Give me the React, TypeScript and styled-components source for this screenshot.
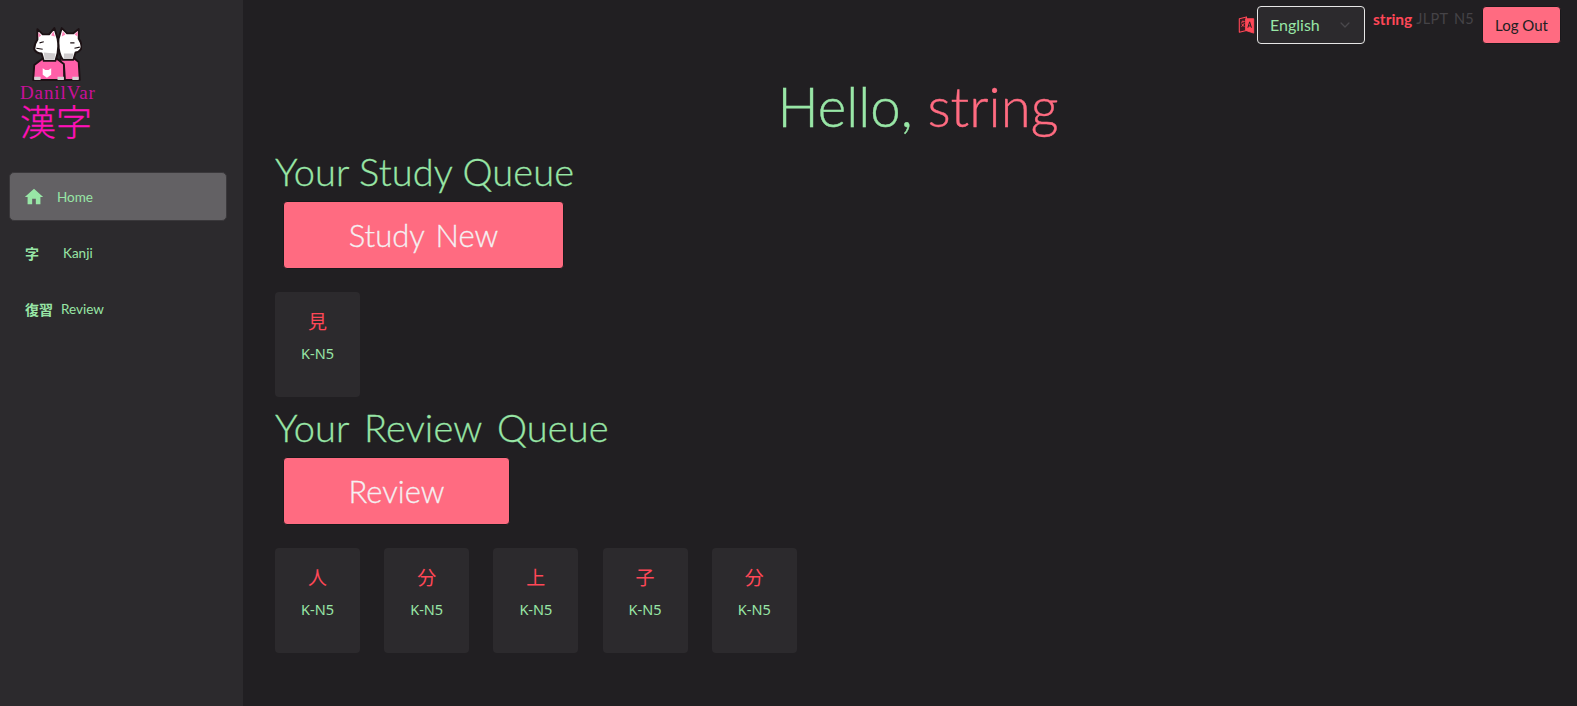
import React, { FC } from 'react';
import styled, { createGlobalStyle } from 'styled-components';
import { MdHome } from 'react-icons/md';
import { IoChevronDown } from 'react-icons/io5';

const GREEN = '#98e6a6';
const PINK = '#ff6b81';
const RED = '#ff4757';

const GlobalStyle = createGlobalStyle`
  html, body {
    margin: 0;
    padding: 0;
    background: #211f22;
  }
  body {
    font-family: Lato, "Noto Sans", "Noto Sans CJK JP", sans-serif;
    overflow: hidden;
  }
`;

const Page = styled.div`
  display: flex;
  width: 1577px;
  height: 706px;
  background: #211f22;
`;

const Sidebar = styled.aside`
  width: 243px;
  flex: none;
  box-sizing: border-box;
  background: #2c2a2d;
  padding: 27px 9px 0;
`;

const Logo = styled.div`
  display: flex;
  flex-direction: column;
  align-items: flex-start;
  padding-left: 11px;
  height: 145px;
`;

const LogoImage = styled.svg`
  width: 50px;
  height: 54px;
  margin-left: 12px;
  display: block;
`;

const LogoName = styled.div`
  font-family: "Liberation Serif", serif;
  font-size: 19px;
  line-height: 21px;
  letter-spacing: 0.9px;
  color: #c9109a;
  margin-top: 1px;
`;

const LogoKanji = styled.div`
  font-family: "Noto Sans CJK JP", sans-serif;
  font-weight: 300;
  font-size: 36px;
  line-height: 34px;
  -webkit-text-stroke: 0.3px currentColor;
  color: #ff10b8;
`;

const NavList = styled.nav`
  display: flex;
  flex-direction: column;
  gap: 7px;
`;

const NavItem = styled.div<{ $active?: boolean; $gap: number }>`
  display: flex;
  align-items: center;
  gap: ${(p) => p.$gap}px;
  height: 49px;
  box-sizing: border-box;
  padding-left: 15px;
  border-radius: 5px;
  width: 218px;
  color: ${GREEN};
  font-size: 13.5px;
  background: ${(p) => (p.$active ? '#636164' : 'transparent')};
  border: 1px solid ${(p) => (p.$active ? '#3a383b' : 'transparent')};
`;

const HomeIcon = styled(MdHome)`
  margin-left: -2px;
`;

const NavGlyph = styled.span`
  font-family: "Noto Sans CJK JP", sans-serif;
  font-weight: 700;
  font-size: 14px;
  color: ${GREEN};
`;

const Main = styled.main`
  flex: 1;
  min-width: 0;
  display: flex;
  flex-direction: column;
  box-sizing: border-box;
  padding: 0 16px 0 32px;
`;

const TopBar = styled.header`
  display: flex;
  justify-content: flex-end;
  align-items: flex-start;
  padding-top: 6px;
  height: 70px;
  box-sizing: border-box;
`;

const LangIcon = styled.svg`
  width: 17px;
  height: 18px;
  margin: 10px 2px 0 0;
`;

const LangSelect = styled.div`
  display: flex;
  align-items: center;
  justify-content: space-between;
  box-sizing: border-box;
  width: 108px;
  height: 38px;
  padding: 0 12px 1px;
  border: 1px solid #e6e6e6;
  border-radius: 4px;
  background: #2c2a2d;
  color: ${GREEN};
  font-size: 16px;
`;

const Chevron = styled(IoChevronDown)`
  width: 14px;
  height: 14px;
  color: #4a484c;
`;

const UserName = styled.span`
  margin-left: 8px;
  color: ${RED};
  font-size: 15.5px;
  font-weight: 700;
  line-height: 26px;
`;

const UserLevel = styled.span`
  margin-left: 4px;
  color: #454347;
  font-size: 14.5px;
  letter-spacing: 0.3px;
  word-spacing: 2px;
  line-height: 26px;
`;

const LogOutButton = styled.button`
  margin-left: 8px;
  width: 79px;
  height: 38px;
  padding: 0;
  border: 1px solid #1a181b;
  border-radius: 4px;
  background: ${PINK};
  color: #211f22;
  font-family: inherit;
  font-size: 15px;
`;

const Greeting = styled.h1`
  margin: 0 0 7px;
  text-align: center;
  font-weight: 300;
  font-size: 54.5px;
  line-height: 72px;
  -webkit-text-stroke: 0.4px currentColor;
  color: ${GREEN};
`;

const Accent = styled.span`
  color: ${PINK};
`;

const SectionTitle = styled.h2<{ $wordSpacing?: number }>`
  margin: 0;
  font-weight: 300;
  font-size: 38px;
  line-height: 44px;
  letter-spacing: 0.1px;
  word-spacing: ${(p) => p.$wordSpacing ?? 0}px;
  -webkit-text-stroke: 0.3px currentColor;
  color: ${GREEN};
`;

const ActionButton = styled.button<{ $width: number }>`
  display: block;
  width: ${(p) => p.$width}px;
  height: 68px;
  margin: 8px 0 23px 8px;
  padding: 0;
  border: 1px solid #1a181b;
  border-radius: 4px;
  background: ${PINK};
  color: #f5f0f2;
  font-family: inherit;
  font-weight: 300;
  font-size: 31px;
  word-spacing: 3px;
  -webkit-text-stroke: 0.3px currentColor;
`;

const CardRow = styled.div`
  display: flex;
  gap: 24.2px;
  margin-bottom: 8px;
`;

const Card = styled.div`
  width: 85px;
  height: 105px;
  box-sizing: border-box;
  padding-top: 16px;
  border-radius: 4px;
  background: #2c2a2d;
  display: flex;
  flex-direction: column;
  align-items: center;
`;

const CardKanji = styled.div`
  font-family: "Noto Sans CJK JP", sans-serif;
  font-size: 19px;
  line-height: 26px;
  color: ${RED};
`;

const CardLevel = styled.div`
  font-family: "Noto Sans", sans-serif;
  font-size: 14.5px;
  line-height: 20px;
  margin-top: 9px;
  color: ${GREEN};
`;

const LogoDrawing: FC = () => (
  <LogoImage viewBox="2 2 47 51">
    <g stroke="#1c1114" strokeWidth="1.8" strokeLinejoin="round">
      {/* right dog */}
      <path d="M29 31 L41 31 L46 35 L47 52 L29 52 Z" fill="#ff5fa8" />
      <path d="M27 13 L30 3 L35 8 L41 8 L46 4 L46 13 Q50 19 48 23 Q46 26 43 26 L41 33 L31 33 Q26 26 27 13 Z" fill="#fff" />
      {/* left dog */}
      <path d="M4 38 L13 31 L24 31 L32 37 L33 52 L3 52 Z" fill="#ff5fa8" />
      <path d="M7 4 L12 9 L18 9 L23 3 L26 13 Q28 24 24 34 L13 34 L11 27 Q6 27 4 23 Q4 18 7 14 Z" fill="#fff" />
    </g>
    <path d="M31 6 L33.500 9 L30 11 Z M45 6 L45 11 L42 9 Z M8 7 L10.500 10 L8 12 Z M22 6 L23.500 11 L20 10 Z" fill="#ff7fb5" />
    <path d="M13 26 L24 27 L23 33 L14 33 Z M32 27 L41 27 L40 32 L32 32 Z" fill="#cfcbcd" />
    <path d="M9 17 L13 16 M6 22 L12 23 M38 17 L42 17 M42 22 L47 21" stroke="#1c1114" strokeWidth="1" fill="none" />
    <path d="M12 41 L14.500 42.500 L17.500 42.500 L20 41 L20 47 L16 50 L12 47 Z" fill="#fff" />
    <path d="M32 38 L32 50" stroke="#1c1114" strokeWidth="1.200" />
    <path d="M4 49 L10 49 L10 52 L4 52 Z M26 49 L32 49 L32 52 L26 52 Z M40 49 L46 49 L46 52 L40 52 Z" fill="#d8d4d6" />
  </LogoImage>
);

const LanguageDrawing: FC = () => (
  <LangIcon viewBox="0 0 18 20">
    <path d="M1 3 L9 1 L9 16 L1 18 Z" fill="#3a1c22" stroke={RED} strokeWidth="1.200" strokeLinejoin="round" />
    <path d="M8 3 L17 3 L17 19 L8 16 Z" fill={RED} stroke={RED} strokeWidth="1" strokeLinejoin="round" />
    <path d="M3 7 L7 6 M5 5 L5 7 M3.500 12 L6.500 8 M3.500 8.500 L6.500 12" stroke={RED} strokeWidth="1" fill="none" />
    <path d="M10.500 13 L12.500 6.500 L14.500 13 M11.200 11 L13.800 11" stroke="#211f22" strokeWidth="1.100" fill="none" />
  </LangIcon>
);

const KanjiCard: FC<{ kanji: string }> = ({ kanji }) => (
  <Card>
    <CardKanji>{kanji}</CardKanji>
    <CardLevel>K-N5</CardLevel>
  </Card>
);

const App: FC = () => {
  return (
    <Page>
      <GlobalStyle />
      <Sidebar>
        <Logo>
          <LogoDrawing />
          <LogoName>DanilVar</LogoName>
          <LogoKanji>漢字</LogoKanji>
        </Logo>
        <NavList>
          <NavItem $active $gap={12}>
            <HomeIcon size={22} />
            <span>Home</span>
          </NavItem>
          <NavItem $gap={24}>
            <NavGlyph>字</NavGlyph>
            <span>Kanji</span>
          </NavItem>
          <NavItem $gap={8}>
            <NavGlyph>復習</NavGlyph>
            <span>Review</span>
          </NavItem>
        </NavList>
      </Sidebar>
      <Main>
        <TopBar>
          <LanguageDrawing />
          <LangSelect>
            <span>English</span>
            <Chevron />
          </LangSelect>
          <UserName>string</UserName>
          <UserLevel>JLPT N5</UserLevel>
          <LogOutButton>Log Out</LogOutButton>
        </TopBar>
        <Greeting>
          Hello, <Accent>string</Accent>
        </Greeting>
        <SectionTitle>Your Study Queue</SectionTitle>
        <ActionButton $width={281}>Study New</ActionButton>
        <CardRow>
          <KanjiCard kanji="見" />
        </CardRow>
        <SectionTitle $wordSpacing={5}>Your Review Queue</SectionTitle>
        <ActionButton $width={227}>Review</ActionButton>
        <CardRow>
          {['人', '分', '上', '子', '分'].map((kanji, i) => (
            <KanjiCard key={i} kanji={kanji} />
          ))}
        </CardRow>
      </Main>
    </Page>
  );
};

export default App;
